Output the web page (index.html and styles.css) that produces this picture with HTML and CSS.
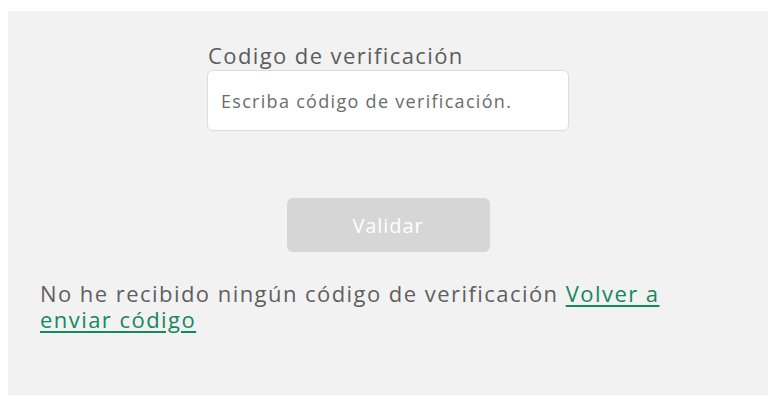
FILE: index.html
```html
<!DOCTYPE html>
<html lang="es">
<head>
    <meta charset="UTF-8">
    <meta name="viewport" content="width=device-width, initial-scale=1.0">
    <title>Verificación</title>
    <link rel="stylesheet" href="styles.css">
</head>
<body>

    <div class="panel">
        <form class="verify-form">
            <label for="codigo" class="field-label">Codigo de verificación</label>
            <input type="text" id="codigo" placeholder="Escriba código de verificación.">

            <button type="button" class="btn-validar" disabled>Validar</button>
        </form>

        <p class="resend">
            No he recibido ningún código de verificación <a href="#">Volver a enviar código</a>
        </p>
    </div>

</body>
</html>
```

FILE: styles.css
```css
body {
    margin: 0;
    padding: 11px 4px 13px 8px;
    font-family: 'Open Sans', 'DejaVu Sans', sans-serif;
    background: #fff;
}

.panel {
    background: #f2f2f2;
    height: 384px;
    box-sizing: border-box;
    padding: 30px 32px 0 32px;
}

.verify-form {
    width: 362px;
    margin: 0 auto;
    display: flex;
    flex-direction: column;
    align-items: center;
}

.field-label {
    align-self: stretch;
    font-size: 22px;
    letter-spacing: 1.4px;
    color: #5c5c5c;
    line-height: 29px;
    margin-left: 1px;
}

.verify-form input {
    width: 100%;
    height: 61px;
    box-sizing: border-box;
    border: 1px solid #dcdcdc;
    border-radius: 6px;
    background: #fff;
    padding: 0 13px;
    font-family: 'Open Sans', 'DejaVu Sans', sans-serif;
    font-size: 18px;
    letter-spacing: 1.3px;
    color: #333;
}

.verify-form input::placeholder {
    color: #6b6b6b;
}

.btn-validar {
    margin-top: 67px;
    width: 203px;
    height: 54px;
    border: none;
    border-radius: 6px;
    background: #d6d6d6;
    color: #fff;
    font-family: 'Open Sans', 'DejaVu Sans', sans-serif;
    font-size: 20px;
    letter-spacing: 0.9px;
    font-weight: 500;
}

.resend {
    margin: 28px 0 0 0;
    font-size: 22px;
    line-height: 26px;
    letter-spacing: 1.45px;
    color: #5f5f5f;
}

.resend a {
    color: #17875f;
    text-decoration-thickness: 2px;
    text-underline-offset: 3px;
}
```
